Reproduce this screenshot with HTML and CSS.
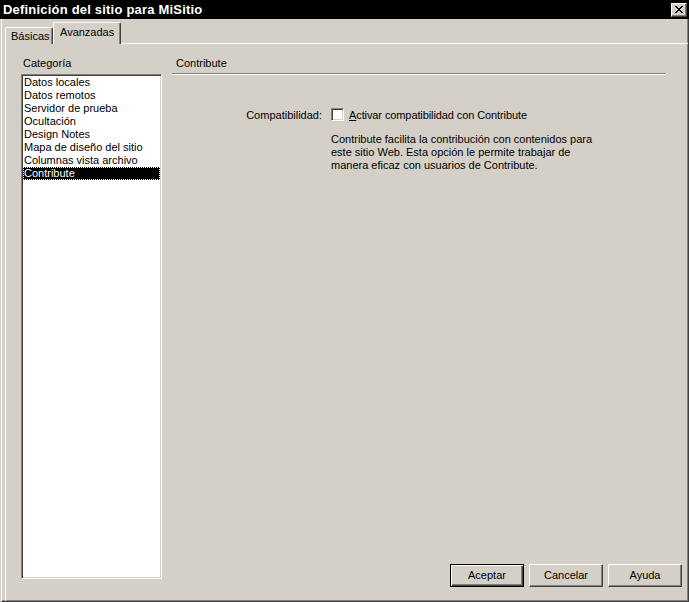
FILE: index.html
```html
<!DOCTYPE html>
<html lang="es">
<head>
<meta charset="utf-8">
<title>Definición del sitio para MiSitio</title>
<link rel="stylesheet" href="styles.css">
</head>
<body>
<div class="window">
  <div class="titlebar">
    <span class="title">Definición del sitio para MiSitio</span>
    <span class="close">
      <svg width="8" height="7" viewBox="0 0 8 7"><path d="M0 0h2v1h1v1h2V1h1V0h2v1H7v1H6v1H5v1h1v1h1v1h1v1H6V6H5V5H3v1H2v1H0V6h1V5h1V4h1V3H2V2H1V1H0z" fill="#000"/></svg>
    </span>
  </div>
  <div class="frame">
    <div class="tabs">
      <div class="tab">Básicas</div>
      <div class="tab active">Avanzadas</div>
    </div>
    <div class="panel">
      <div class="leftcol">
        <div class="label">Categoría</div>
        <div class="listbox">
          <div class="item">Datos locales</div>
          <div class="item">Datos remotos</div>
          <div class="item">Servidor de prueba</div>
          <div class="item">Ocultación</div>
          <div class="item">Design Notes</div>
          <div class="item">Mapa de diseño del sitio</div>
          <div class="item">Columnas vista archivo</div>
          <div class="item selected"><span class="focus">Contribute</span></div>
        </div>
      </div>
      <div class="rightcol">
        <div class="heading">Contribute</div>
        <div class="separator"></div>
        <div class="formrow">
          <div class="formlabel">Compatibilidad:</div>
          <div class="formfield">
            <div class="checkrow">
              <span class="checkbox"></span>
              <span class="checktext"><u>A</u>ctivar compatibilidad con Contribute</span>
            </div>
            <p class="desc">Contribute facilita la contribución con contenidos para<br>este sitio Web. Esta opción le permite trabajar de<br>manera eficaz con usuarios de Contribute.</p>
          </div>
        </div>
        <div class="buttons">
          <span class="btn default">Aceptar</span>
          <span class="btn">Cancelar</span>
          <span class="btn">Ayuda</span>
        </div>
      </div>
    </div>
  </div>
</div>
</body>
</html>
```
FILE: styles.css
```css
* { box-sizing: border-box; }
html, body { margin: 0; padding: 0; }
body {
  background: #d4d0c8;
  font-family: "Liberation Sans", Arial, sans-serif;
  font-size: 11px;
  line-height: 13px;
  color: #000;
}
.window {
  width: 689px;
  height: 602px;
  background: #d4d0c8;
  overflow: hidden;
}
.titlebar {
  height: 19px;
  background: #000;
  display: flex;
  align-items: center;
  justify-content: space-between;
  padding: 0 2px 0 3px;
}
.title {
  color: #fff;
  font-weight: bold;
  font-size: 13px;
  letter-spacing: 0.2px;
  line-height: 19px;
}
.close {
  width: 16px;
  height: 14px;
  background: #d4d0c8;
  border-style: solid;
  border-width: 1px;
  border-color: #fff #404040 #404040 #fff;
  box-shadow: inset -1px -1px #808080;
  display: flex;
  align-items: center;
  justify-content: center;
  padding: 0 1px 1px 0;
}
.close svg { display: block; }
.frame {
  height: 583px;
  margin-left: 1px;
  border-left: 1px solid #fff;
  border-right: 1px solid #404040;
  border-bottom: 1px solid #404040;
  box-shadow: inset -1px -1px #808080;
  padding: 3px 0 0 3px;
  display: flex;
  flex-direction: column;
}
.tabs {
  height: 21px;
  display: flex;
  align-items: flex-end;
  position: relative;
  z-index: 1;
}
.tab {
  height: 17px;
  padding: 2px 0 0 5px;
  border-top: 1px solid #fff;
  border-left: 1px solid #fff;
  border-right: 1px solid #404040;
  box-shadow: inset -1px 0 #808080;
  border-radius: 2px 2px 0 0;
  margin-bottom: -1px;
  background: #d4d0c8;
  white-space: nowrap;
}
.tab:first-child { width: 48px; }
.tab.active {
  height: 22px;
  width: 68px;
  padding: 3px 0 0 6px;
  margin-bottom: -1px;
  border-bottom: 0;
}
.panel {
  flex: 1;
  border-top: 1px solid #fff;
  border-left: 1px solid #fff;
  display: flex;
  padding: 13px 0 14px 15px;
}
.leftcol {
  width: 141px;
  display: flex;
  flex-direction: column;
}
.label { height: 13px; padding-left: 2px; }
.listbox {
  margin-top: 4px;
  height: 505px;
  background: #fff;
  border-style: solid;
  border-width: 1px;
  border-color: #808080 #fff #fff #808080;
  box-shadow: inset 1px 1px #404040, inset -1px -1px #d4d0c8;
  padding: 1px 1px;
}
.item {
  height: 13px;
  padding-left: 1px;
  white-space: nowrap;
}
.item.selected {
  background: #000;
  color: #fff;
  outline: 1px dotted #fff;
  outline-offset: -1px;
}
.rightcol {
  margin-left: 10px;
  width: 511px;
  display: flex;
  flex-direction: column;
}
.heading { height: 13px; padding-left: 4px; }
.separator {
  margin-top: 3px;
  width: 493px;
  height: 2px;
  border-top: 1px solid #808080;
  border-bottom: 1px solid #fff;
}
.formrow {
  margin-top: 33px;
  display: flex;
}
.formlabel {
  width: 150px;
  text-align: right;
  padding-top: 1px;
}
.formfield { margin-left: 9px; }
.checkrow {
  display: flex;
  align-items: flex-start;
}
.checkbox {
  width: 13px;
  height: 13px;
  background: #fff;
  border-style: solid;
  border-width: 1px;
  border-color: #808080 #fff #fff #808080;
  box-shadow: inset 1px 1px #404040, inset -1px -1px #d4d0c8;
}
.checktext { margin-left: 5px; padding-top: 1px; letter-spacing: -0.1px; }
.checktext u { text-decoration: underline; }
.desc {
  margin: 11px 0 0 0;
  line-height: 13px;
}
.buttons {
  margin-top: auto;
  display: flex;
  justify-content: flex-end;
  gap: 5px;
  padding-right: 1px;
}
.btn {
  width: 74px;
  height: 23px;
  display: flex;
  align-items: center;
  justify-content: center;
  border-style: solid;
  border-width: 1px;
  border-color: #fff #404040 #404040 #fff;
  box-shadow: inset -1px -1px #808080;
}
.btn.default {
  border: 1px solid #000;
  box-shadow: inset 1px 1px #fff, inset -1px -1px #404040, inset -2px -2px #808080;
}
```
